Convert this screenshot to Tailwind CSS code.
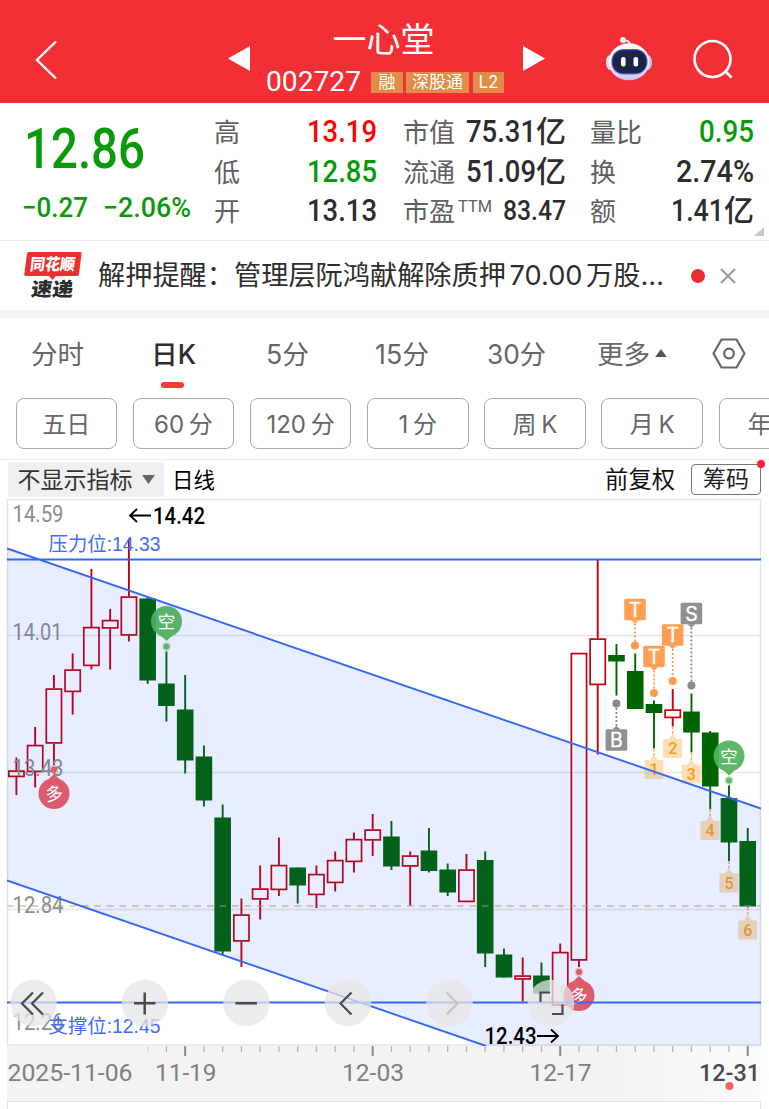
<!DOCTYPE html>
<html lang="zh-CN">
<head>
<meta charset="utf-8">
<title>一心堂 002727</title>
<script src="https://cdn.jsdelivr.net/npm/@tailwindcss/browser@4"></script>
</head>
<body class="w-[769px] h-[1109px] overflow-hidden bg-white font-['Inter','Noto_Sans_CJK_SC',sans-serif] text-[#333]">
<header class="flex items-center h-[103px] pl-[35px] bg-[#f12f35] text-white">
  <svg class="w-[22px] h-[40px] mt-[16px] shrink-0" viewBox="0 0 22 40" fill="none" stroke="#fff" stroke-width="2.4"><path d="M21 1.5 2 20 21 38.500"/></svg>
  <svg class="w-[22px] h-[25px] ml-[171px] mt-[14px] shrink-0" viewBox="0 0 22 25" fill="#fff"><path d="M22 0V25L0 12.500Z"/></svg>
  <div class="ml-[16px] w-[238px] h-full shrink-0 flex flex-col">
    <div class="h-[40px] mt-[20px] flex items-center justify-center text-[34px] leading-[40px]"><span class="block -mt-[1px] -ml-[3px]">一心堂</span></div>
    <div class="flex items-center h-[26px] mt-[9px] whitespace-nowrap">
      <span class="font-['Roboto'] text-[28px] leading-[26px]" data-w="95">002727</span>
      <span class="ml-[10px] w-[32px] h-[21px] bg-[#e28c47] text-[17px] leading-[20px] text-center">融</span>
      <span class="ml-[3px] w-[63px] h-[21px] bg-[#e28c47] text-[17px] leading-[20px] text-center">深股通</span>
      <span class="ml-[4px] w-[31px] h-[21px] bg-[#e28c47] text-[17px] leading-[20px] text-center">L2</span>
    </div>
  </div>
  <svg class="w-[22px] h-[25px] ml-[19px] mt-[14px] shrink-0" viewBox="0 0 22 25" fill="#fff"><path d="M0 0V25L22 12.500Z"/></svg>
  <svg class="w-[48px] h-[46px] ml-[60px] mt-[14px] shrink-0" viewBox="0 0 48 46">
    <defs>
      <linearGradient id="shell" x1="0" y1="0" x2="0" y2="1"><stop offset="0" stop-color="#fff"/><stop offset=".6" stop-color="#eeecf8"/><stop offset="1" stop-color="#c9c5ea"/></linearGradient>
      <linearGradient id="face" x1="0" y1="0" x2="1" y2="1"><stop offset="0" stop-color="#3b62c8"/><stop offset=".5" stop-color="#6f3fd8"/><stop offset="1" stop-color="#5a78f0"/></linearGradient>
    </defs>
    <path d="M19 5Q25 3.500 25 10" fill="none" stroke="#e9e5f3" stroke-width="2"/>
    <circle cx="18" cy="4" r="3" fill="#f3eff8"/>
    <ellipse cx="5" cy="26.500" rx="4" ry="7.500" fill="#dcdcf0"/><ellipse cx="43" cy="26.500" rx="4" ry="7.500" fill="#bfc4f0"/>
    <ellipse cx="24" cy="25.800" rx="20.500" ry="18.500" fill="url(#shell)"/>
    <rect x="6.500" y="13" width="36" height="25.500" rx="12" fill="url(#face)"/>
    <rect x="7.500" y="14.300" width="34" height="23" rx="11" fill="#1a2447"/>
    <rect x="16" y="21" width="4.600" height="9.500" rx="2" fill="#fff"/><rect x="28.500" y="21" width="4.600" height="9.500" rx="2" fill="#fff"/>
  </svg>
  <svg class="w-[42px] h-[42px] ml-[39px] mt-[17px] shrink-0" viewBox="0 0 42 42" fill="none" stroke="#fff" stroke-width="2.600"><circle cx="20.500" cy="20" r="18"/><path d="M33 32 39.500 38.500"/></svg>
</header>

<section class="relative flex h-[138px] border-b border-[#ececec] text-[26px] leading-[39.500px] whitespace-nowrap">
  <div class="w-[214px] pl-[22px] font-['Roboto'] text-[#0a9a0a]">
    <div class="h-[60px] mt-[16px] pl-[2px] text-[55px] leading-[60px] font-medium"><span data-w="121">12.86</span></div>
    <div class="flex mt-[13px] h-[32px] text-[28px] leading-[32px] font-medium">
      <span data-w="66">−0.27</span>
      <span class="ml-[15px]" data-w="88">−2.06%</span>
    </div>
  </div>
  <div class="w-[163px] pt-[9px] text-[#606060]">
    <div class="flex justify-between"><span class="pt-px -mb-px">高</span><span class="font-['Roboto'] font-medium text-[30.500px] text-[#ff0000]" data-w="70">13.19</span></div>
    <div class="flex justify-between"><span class="pt-px -mb-px">低</span><span class="font-['Roboto'] font-medium text-[30.500px] text-[#0a9a0a]" data-w="70">12.85</span></div>
    <div class="flex justify-between"><span class="pt-px -mb-px">开</span><span class="font-['Roboto'] font-medium text-[30.500px] text-[#2d2d2d]" data-w="70">13.13</span></div>
  </div>
  <div class="ml-[26px] w-[163px] pt-[9px] text-[#606060]">
    <div class="flex justify-between"><span class="pt-px -mb-px">市值</span><span class="flex text-[#2d2d2d]"><span class="font-['Roboto'] font-medium text-[30.500px]" data-w="70">75.31</span><span class="text-[30px] font-medium">亿</span></span></div>
    <div class="flex justify-between"><span class="pt-px -mb-px">流通</span><span class="flex text-[#2d2d2d]"><span class="font-['Roboto'] font-medium text-[30.500px]" data-w="70">51.09</span><span class="text-[30px] font-medium">亿</span></span></div>
    <div class="flex"><span class="pt-px -mb-px">市盈</span><span class="ml-[3px] -mt-[4px] font-['Roboto'] text-[17px]" data-w="34">TTM</span><span class="ml-auto font-['Roboto'] font-medium text-[27.500px] text-[#2d2d2d]" data-w="63">83.47</span></div>
  </div>
  <div class="ml-[24px] w-[164px] pt-[9px] text-[#606060]">
    <div class="flex justify-between"><span class="pt-px -mb-px">量比</span><span class="font-['Roboto'] font-medium text-[30.500px] text-[#0a9a0a]" data-w="55">0.95</span></div>
    <div class="flex justify-between"><span class="pt-px -mb-px">换</span><span class="font-['Roboto'] font-medium text-[30.500px] text-[#2d2d2d]" data-w="78">2.74%</span></div>
    <div class="flex justify-between"><span class="pt-px -mb-px">额</span><span class="flex text-[#2d2d2d]"><span class="font-['Roboto'] font-medium text-[30.500px]" data-w="53">1.41</span><span class="text-[30px] font-medium">亿</span></span></div>
  </div>
  <svg class="absolute left-[754px] top-[124px] w-[10px] h-[9px]" viewBox="0 0 10 9" fill="#c8c8c8"><path d="M10 0V9H0Z"/></svg>
</section>

<section class="flex items-center h-[69px] pl-[24px]">
  <svg class="w-[58px] h-[50px] shrink-0" viewBox="0 0 58 50">
    <path d="M5 1H56Q58 1 57.500 3L55 23Q54.800 25 53 25H32L28.500 29 25 25H2Q0 25 .3 23L3 3Q3.200 1 5 1Z" fill="#e8302f"/>
    <g transform="skewX(-7)" font-family="Noto Sans CJK SC" font-weight="900">
      <text x="8" y="19.500" font-size="16" textLength="45" lengthAdjust="spacingAndGlyphs" fill="#fff">同花顺</text>
      <text x="12" y="45.500" font-size="19" textLength="42" lengthAdjust="spacingAndGlyphs" fill="#2b2b2b">速递</text>
    </g>
  </svg>
  <div class="ml-[16px] w-[566px] flex text-[27px] leading-[40px] text-[#2d2d2d] [word-spacing:-4px]"><span data-w="566">解押提醒：管理层阮鸿献解除质押 70.00 万股…</span></div>
  <span class="ml-[27px] size-[14px] rounded-full bg-[#ea2e30]"></span>
  <svg class="ml-[15px] w-[16px] h-[16px]" viewBox="0 0 16 16" stroke="#999" stroke-width="2"><path d="M1 1 15 15M15 1 1 15"/></svg>
</section>
<div class="h-[8px] bg-[#f3f3f3]"></div>

<nav class="flex h-[80px] pt-[17px] pl-[31px] text-[26.500px] leading-[38px] text-[#666]">
  <span class="w-[120px]">分时</span>
  <span class="w-[115px] text-[#2d2d2d] font-medium flex flex-col items-start"><span data-w="45">日K</span><i class="block w-[23px] h-[6px] mt-[9px] ml-[10px] rounded-[3px] bg-[#fb3b33]"></i></span>
  <span class="w-[109px] flex"><span data-w="43">5分</span></span>
  <span class="w-[112px] flex"><span data-w="54">15分</span></span>
  <span class="w-[110px] flex"><span data-w="59">30分</span></span>
  <span class="flex w-[115px]">更多<svg class="ml-[5px] mt-[14px] w-[12px] h-[8px]" viewBox="0 0 13 9" fill="#555"><path d="M6.500 0 13 9H0Z"/></svg></span>
  <svg class="mt-[3px] w-[34px] h-[31px]" viewBox="0 0 34 31" fill="none" stroke="#666" stroke-width="2.200" stroke-linejoin="round"><path d="M9.500 1.500H24.500L32.500 15.500 24.500 29.500H9.500L1.500 15.500Z"/><circle cx="17" cy="15.500" r="4.800"/></svg>
</nav>
<div class="flex gap-[15.700px] h-[62px] pl-[15.500px] overflow-hidden text-[24px] leading-[51px] text-center text-[#666] border-b border-[#ececec] [word-spacing:-2px]">
  <span class="w-[101.500px] h-[51px] shrink-0 rounded-[8px] border border-[#aaa]">五日</span>
  <span class="w-[101.500px] h-[51px] shrink-0 rounded-[8px] border border-[#aaa]">60 分</span>
  <span class="w-[101.500px] h-[51px] shrink-0 rounded-[8px] border border-[#aaa]">120 分</span>
  <span class="w-[101.500px] h-[51px] shrink-0 rounded-[8px] border border-[#aaa]">1 分</span>
  <span class="w-[101.500px] h-[51px] shrink-0 rounded-[8px] border border-[#aaa]">周 K</span>
  <span class="w-[101.500px] h-[51px] shrink-0 rounded-[8px] border border-[#aaa]">月 K</span>
  <span class="w-[101.500px] h-[51px] shrink-0 rounded-[8px] border border-[#aaa] pl-[28px] text-left">年</span>
</div>

<div class="flex items-center h-[38px] pl-[7.500px] pr-[8px] text-[23px] leading-[36px]">
  <span class="flex items-center w-[156.500px] h-[35px] pl-[10px] rounded-[3px] bg-[#f0f0f0] text-[#333]"><span class="block h-[34px]">不显示指标</span><svg class="ml-[9px] w-[13px] h-[9px]" viewBox="0 0 13 9" fill="#666"><path d="M0 0H13L6.500 9Z"/></svg></span>
  <span class="ml-[8px] pt-[1px] text-[21.500px] text-black">日线</span>
  <span class="ml-auto pt-[1px] text-[23.300px] text-[#111]">前复权</span>
  <span class="relative ml-[16px] w-[70px] h-[31px] rounded-[4px] border-[1.500px] border-[#777] text-center text-[23px] leading-[29px] text-[#222]">筹码<i class="absolute right-[-5px] top-[-5px] size-[8px] rounded-full bg-[#ff2035]"></i></span>
</div>

<svg id="chart" class="block w-[769px] h-[611px]" viewBox="0 498 769 611" font-family="Roboto, 'Noto Sans CJK SC', sans-serif">
  <defs>
    <linearGradient id="axis" x1="0" y1="0" x2="1" y2="0"><stop offset="0" stop-color="#f3f3f3"/><stop offset=".8" stop-color="#f3f3f3"/><stop offset="1" stop-color="#fbfbfb"/></linearGradient>
    <clipPath id="plot"><rect x="7" y="499" width="754" height="547"/></clipPath>
  </defs>
  <rect x="7" y="1046" width="754" height="55" fill="url(#axis)"/>
  <path d="M7 1101.500H761M7.500 1101V1109M760.500 1101V1109" stroke="#e4e4e4" fill="none"/>
  <g stroke="#e6e6e8" stroke-width="1.300" fill="none"><path d="M7 499.500H761M7 635.500H761M7 772.500H761M7 909.500H761M7 1045H761"/><path d="M7.500 499V1045M760.500 499V1045" stroke-width="1.600"/></g>
  <path d="M7 906H761" stroke="#e3c9a0" stroke-width="1.500" stroke-dasharray="6.500 6"/>
  <g id="candles"></g>
  <path d="M7 906H761" stroke="#e3c9a0" stroke-width="1.500" stroke-dasharray="6.500 6" opacity=".45"/>
  <g fill="#8e8e8e" font-size="23">
    <text x="12.500" y="522" textLength="51" lengthAdjust="spacingAndGlyphs">14.59</text>
    <text x="12.500" y="639.500" textLength="50" lengthAdjust="spacingAndGlyphs">14.01</text>
    <text x="12.500" y="776" textLength="51" lengthAdjust="spacingAndGlyphs">13.43</text>
    <text x="12.500" y="913" textLength="51" lengthAdjust="spacingAndGlyphs">12.84</text>
    <text x="12.500" y="1030" textLength="51" lengthAdjust="spacingAndGlyphs">12.26</text>
  </g>
  <g id="marks"></g>
  <path d="M7 548.500 761 808.500V1046H486L7 880.500Z" fill="#194bff" fill-opacity=".1"/>
  <g id="pins"></g>
  <g fill="#000">
    <path d="M151 515.500H130M137 509 130 515.500 137 522" fill="none" stroke="#000" stroke-width="1.800"/>
    <text x="153" y="524" font-size="23" font-weight="500" textLength="52" lengthAdjust="spacingAndGlyphs">14.42</text>
    <text x="484.500" y="1043.500" font-size="23" font-weight="500" textLength="52" lengthAdjust="spacingAndGlyphs">12.43</text>
    <path d="M537 1036H558M551 1029.500 558 1036 551 1042.500" fill="none" stroke="#000" stroke-width="1.800"/>
  </g>
  <g stroke="#3468f5" stroke-width="1.900" fill="none" clip-path="url(#plot)"><path d="M7 559.500H761M7 1002.500H761M7 548.500 761 808.500M7 880.500 486 1046"/></g>
  <g fill="#3f6ef2" font-size="19.500" font-family="'Liberation Sans','Noto Sans CJK SC',sans-serif">
    <text x="48.500" y="551" textLength="112" lengthAdjust="spacingAndGlyphs">压力位:14.33</text>
    <text x="48.500" y="1033" textLength="112" lengthAdjust="spacingAndGlyphs">支撑位:12.45</text>
  </g>
  <g fill="#e6e6e6" fill-opacity=".75"><circle cx="33.500" cy="1003" r="23.300"/><circle cx="145" cy="1003" r="23.300"/><circle cx="246.500" cy="1003" r="23.300"/><circle cx="348" cy="1003" r="23.300"/><circle cx="449.500" cy="1003" r="23.300"/><circle cx="551" cy="1003" r="23.300"/></g>
  <g fill="none" stroke="#4a4a4a" stroke-width="2.200">
    <path d="M33 992.500 22 1003.500 33 1014.500M43 992.500 32 1003.500 43 1014.500"/>
    <path d="M134 1003.300H155.500M144.700 992.500V1014.500M235.500 1003.300H257" stroke-width="2.500"/>
    <path d="M351.500 992.500 340.500 1003.500 351.500 1014.500"/>
    <path d="M446.500 992.500 457.500 1003.500 446.500 1014.500" stroke="#c3c4c8"/>
    <path d="M540.500 1002V992.500H550M552 1014H562.500V1004.500"/>
  </g>
  <g id="ticks"></g>
  <g fill="#808080" font-size="23.500">
    <text x="7.500" y="1080.500" textLength="125" lengthAdjust="spacingAndGlyphs">2025-11-06</text>
    <text x="155" y="1080.500" textLength="61.500" lengthAdjust="spacingAndGlyphs">11-19</text>
    <text x="342" y="1080.500" textLength="62" lengthAdjust="spacingAndGlyphs">12-03</text>
    <text x="529.500" y="1080.500" textLength="62" lengthAdjust="spacingAndGlyphs">12-17</text>
    <text x="699" y="1080.500" textLength="61" lengthAdjust="spacingAndGlyphs" fill="#4a4a4a" font-weight="500">12-31</text>
  </g>
  <circle cx="729.500" cy="1086" r="4" fill="#f4605e"/>
</svg>

<script>
// Each row: colour, wick top, body top, body bottom, wick bottom (y coordinates)
const rows = [
 ['r',757.5,770.5,777,795],['r',727,745,772,787.5],['r',675,688.5,743.5,765],['r',653.5,669.5,692,714.5],['r',569,627,666,669.5],
 ['r',609,620,628.5,669.5],['r',538.5,596.5,635.5,641.5],['g',597,598.5,680.5,684],['g',651.5,683.5,706,721.5],['g',675,709.5,760.5,773.5],
 ['g',745.5,756.5,800.5,806.5],['g',804.5,817.5,951.5,955],['r',898.5,914.5,941.5,967],['r',865.5,888.5,899.5,919.5],['r',837.5,865,890,896],
 ['g',867.5,867.5,885.5,903.5],['r',865.5,874,895,908],['r',851.5,860,883,891.5],['r',832.5,839,862,872.5],['r',814,829.5,840.5,856],
 ['g',821,836.5,866.5,870],['r',851.5,855.5,866.5,905.5],['g',828,850.5,871,872.5],['g',863.5,869.5,892.5,896],['r',854,869.5,902,902],
 ['g',851.5,860,953.5,967],['g',948.5,954.5,977.5,977.5],['r',957.5,975.5,979.5,1001.5],['g',962.5,975.5,993.5,993.5],['r',943.5,952,1005.5,1005.5],
 ['r',653,653,960.5,967],['r',560,638.5,685,754.5],['g',644,655,661.5,695.5],['g',653.5,671,709,709],['g',700.5,704,713,748.5],
 ['r',689,709.5,718,726.5],['g',693.5,711.5,732.5,752.5],['g',731,732.5,786.5,809],['g',785.5,798,842.5,861],['g',828,841,906.5,907.5]];
const cx = i => 16.4 + i * 18.752;
let s = '';
rows.forEach(([c, hi, t, b, lo], i) => {
  const x = cx(i);
  if (c === 'r') s += `<path d="M${x} ${hi}V${t}M${x} ${b}V${lo}" stroke="#c4000c" stroke-width="1.9"/><rect x="${x-7.6}" y="${t+.6}" width="15.2" height="${b-t-1.2}" fill="none" stroke="#c4000c" stroke-width="1.7"/>`;
  else s += `<path d="M${x} ${hi}V${lo}" stroke="#006400" stroke-width="1.9"/><rect x="${x-8.3}" y="${t}" width="16.6" height="${b-t}" fill="#006400"/>`;
});
document.getElementById('candles').innerHTML = s;

let p = '';
const pin = (x, y, dotY, ch, col) => {
  const d = dotY > y ? 1 : -1;
  p += `<g opacity=".93"><circle cx="${x}" cy="${dotY}" r="4.5" fill="${col}" opacity=".3"/><circle cx="${x}" cy="${dotY}" r="3" fill="${col}"/><circle cx="${x}" cy="${y}" r="15.5" fill="${col}"/><path d="M${x-6} ${y+d*14}L${x} ${y+d*19.5}L${x+6} ${y+d*14}Z" fill="${col}"/></g><text x="${x}" y="${y+6.5}" text-anchor="middle" font-size="17.5" fill="#fff" font-family="Noto Sans CJK SC"${ch === '多' ? ` transform="rotate(-8 ${x} ${y})"` : ''}>${ch}</text>`;
};
pin(54, 793.5, 769.5, '多', '#dc5264'); pin(166.5, 621.5, 646.5, '空', '#4eb060');
pin(579, 995.5, 972, '多', '#dc5264'); pin(729, 756, 780.5, '空', '#50b45c');
document.getElementById('pins').innerHTML = p;

let m = '';
const flag = (x, y, dotY, ch, col) => {
  const d = dotY > y ? 1 : -1;
  m += `<path d="M${x} ${y+d*14}V${dotY}" stroke="${col}" stroke-width="1.8" stroke-dasharray="2 2"/><circle cx="${x}" cy="${dotY}" r="4" fill="${col}"/><rect x="${x-10.8}" y="${y-10.8}" width="21.6" height="21.6" rx="1.5" fill="${col}" fill-opacity=".95"/><path d="M${x-4} ${y+d*10.8}L${x} ${y+d*14}L${x+4} ${y+d*10.8}Z" fill="${col}"/><text x="${x}" y="${y+7}" text-anchor="middle" font-size="19.5" fill="#fff" stroke="#fff" stroke-width=".4" font-family="Inter">${ch}</text>`;
};
flag(635, 609.5, 645.5, 'T', '#ff9a4a'); flag(654, 656.5, 693, 'T', '#ff9a4a'); flag(672.7, 635, 681, 'T', '#ff9a4a');
flag(691.4, 613.5, 685.5, 'S', '#8a8a8a'); flag(616.4, 740, 703.5, 'B', '#8a8a8a');
[[654,769,748.5],[672.7,748,726.5],[691.4,773.5,752.5],[710,830,809],[729,882.5,861],[747.7,929.5,907.5]].forEach(([x, y, top], i) => {
  m += `<path d="M${x} ${top}V${y-12}" stroke="#f8b050" stroke-width="1.4" stroke-dasharray="3 1.5"/><path d="M${x-9.5} ${y-9}H${x-4}L${x} ${y-14}L${x+4} ${y-9}H${x+9.5}V${y+10}H${x-9.5}Z" fill="#fcd9a8" fill-opacity=".85"/><text x="${x}" y="${y+6}" text-anchor="middle" font-size="16" fill="#f59e1e" font-weight="500">${i+1}</text>`;
});
document.getElementById('marks').innerHTML = m;

let t = '';
for (let i = 7; i < 40; i++) {
  const major = (i - 9) % 10 === 0;
  t += `<path d="M${cx(i)} 1046V${major ? 1056 : 1052}" stroke="${major ? '#8a8a8a' : '#b4b4b4'}" stroke-width="${major ? 2 : 1.3}" opacity="${i === 7 ? .4 : 1}"/>`;
}
document.getElementById('ticks').innerHTML = t;

document.querySelectorAll('[data-w]').forEach(e => {
  const w = e.dataset.w;
  e.innerHTML = `<svg class="inline align-baseline overflow-visible max-w-none h-[1px]" width="${w}" height="1"><text x="0" y="1" fill="currentColor" textLength="${w}" lengthAdjust="spacingAndGlyphs">${e.textContent}</text></svg>`;
});
</script>
</body>
</html>
